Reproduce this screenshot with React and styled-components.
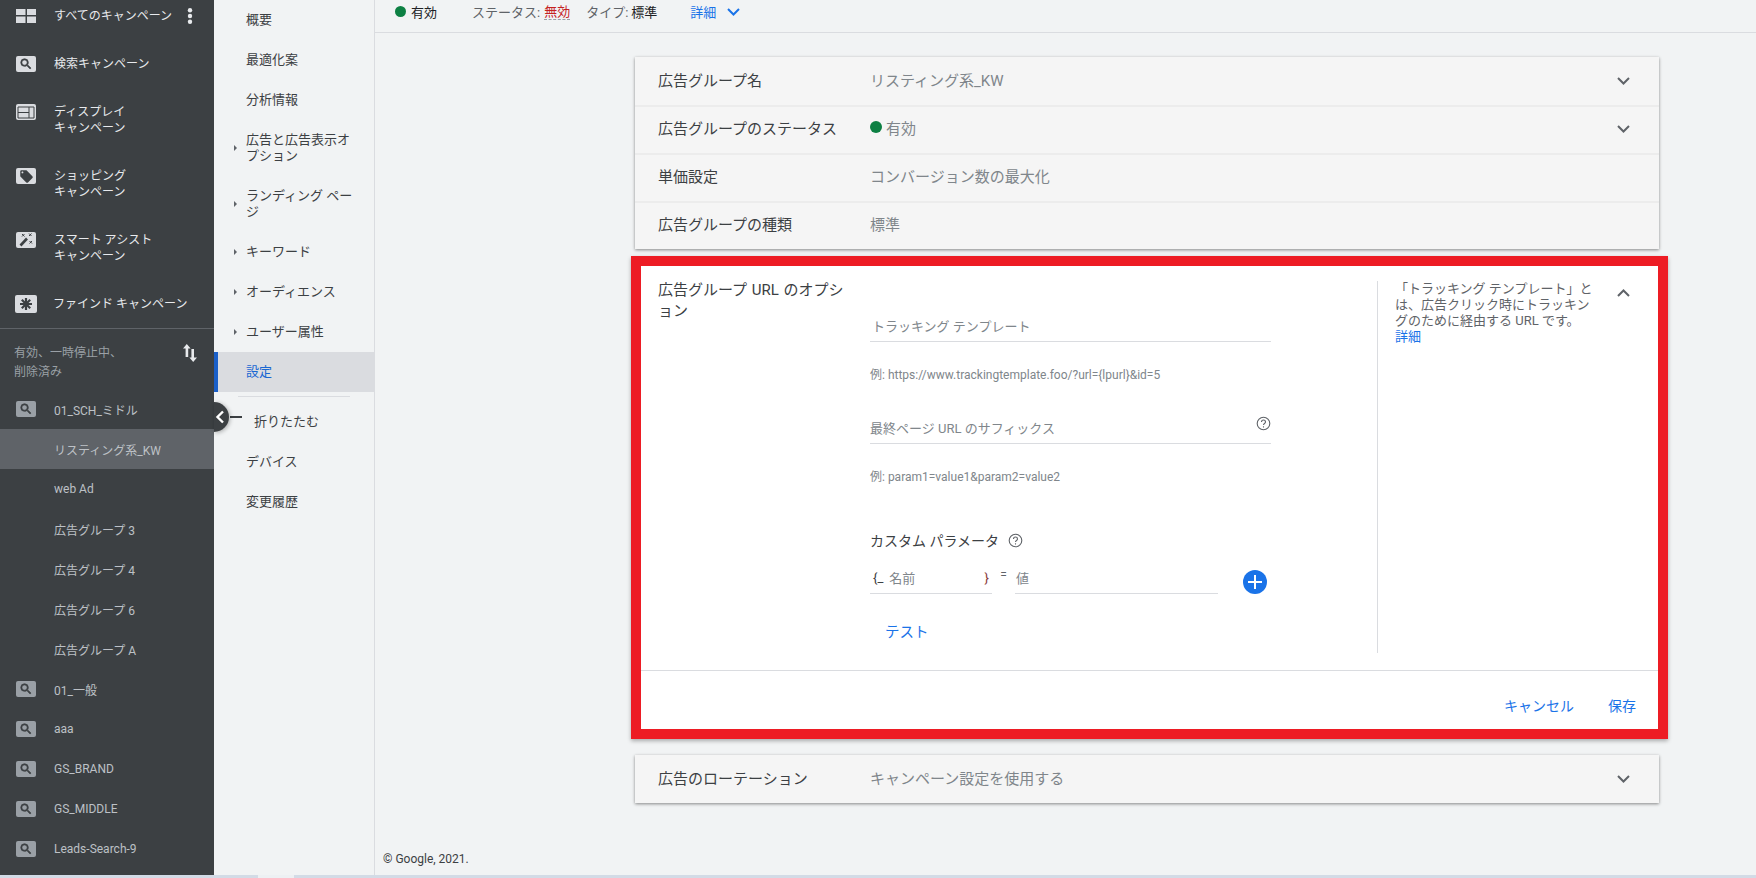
import React from "react";
import styled, { createGlobalStyle } from "styled-components";

const GlobalStyle = createGlobalStyle`
  html, body {
    margin: 0;
    padding: 0;
    height: 100%;
    overflow: hidden;
    background: #f1f3f4;
    font-family: Roboto, "Noto Sans CJK JP", sans-serif;
  }
  * {
    box-sizing: border-box;
  }
`;

const Page = styled.div`
  display: flex;
  flex-direction: column;
  width: 1756px;
  height: 878px;
  overflow: hidden;
`;

const Body = styled.div`
  display: flex;
  flex: 1;
  min-height: 0;
`;

const ScrollTrack = styled.div`
  flex: none;
  height: 3px;
  background: #d3dbe6;
  padding-left: 258px;
`;

const ScrollThumb = styled.div`
  width: 36px;
  height: 100%;
  background: #edf0f3;
`;

/* dark campaign tree */
const Sidebar = styled.aside`
  flex: none;
  width: 214px;
  background: #3c4043;
  overflow: hidden;
`;

const CampaignRow = styled.div`
  display: flex;
  align-items: ${(props) => (props.$multi ? "flex-start" : "center")};
  height: ${(props) => props.$height || 64}px;
  padding: ${(props) => (props.$multi ? "8px" : "0")} 0 0 16px;
  color: #e8eaed;
  font-size: 12px;
  line-height: 16px;
`;

const GroupRow = styled.div`
  display: flex;
  align-items: center;
  height: 40px;
  padding-left: ${(props) => (props.$child ? 54 : 16)}px;
  color: #bdc1c6;
  font-size: 12px;
  background: ${(props) => (props.$selected ? "#5f6368" : "transparent")};
`;

const Badge = styled.span`
  flex: none;
  display: flex;
  align-items: center;
  justify-content: center;
  width: ${(props) => props.$width || 20}px;
  height: ${(props) => props.$tall || 16}px;
  margin-right: ${(props) => (props.$width ? 16 : 18)}px;
  margin-left: ${(props) => (props.$width ? -1 : 0)}px;
  border-radius: 2px;
  background: ${(props) => props.$bg || "#dadce0"};
  color: #3c4043;
`;

const RowText = styled.span`
  flex: 1;
  white-space: nowrap;
`;

const RowGlyph = styled.span`
  flex: none;
  display: flex;
  width: 14px;
  margin-right: 13px;
`;

const ScopeBar = styled.div`
  display: flex;
  justify-content: space-between;
  height: 61px;
  margin-top: 8px;
  padding: 15px 17px 0 14px;
  border-top: 1px solid #5f6368;
  color: #9aa0a6;
  font-size: 12px;
  line-height: 19px;
`;

/* light section nav */
const NavPanel = styled.nav`
  position: relative;
  flex: none;
  width: 161px;
  border-right: 1px solid #dadce0;
  background: #f1f3f4;
  color: #3c4043;
  font-size: 13px;
  line-height: 16px;
`;

const NavItem = styled.div`
  display: flex;
  align-items: center;
  height: ${(props) => props.$height || 40}px;
  padding-right: 14px;
  color: ${(props) => (props.$active ? "#1967d2" : "#3c4043")};
  background: ${(props) => (props.$active ? "#dadce0" : "transparent")};
  box-shadow: ${(props) => (props.$active ? "inset 4px 0 0 #1a5fc8" : "none")};
`;

const ArrowSlot = styled.span`
  flex: none;
  width: 32px;
  padding-left: 20px;
`;

const Triangle = styled.span`
  display: block;
  width: 0;
  height: 0;
  border-top: 3.5px solid transparent;
  border-bottom: 3.5px solid transparent;
  border-left: 3.5px solid #5f6368;
`;

const NavDivider = styled.div`
  height: 1px;
  margin: 4px 24px 5px 24px;
  background: #dadce0;
`;

const CollapseRow = styled.div`
  display: flex;
  align-items: center;
  height: 40px;
  padding-left: 40px;
`;

const Handle = styled.button`
  position: absolute;
  left: 0;
  top: 402px;
  display: flex;
  align-items: center;
  width: 15px;
  height: 30px;
  padding: 0 0 0 1px;
  border: 0;
  border-radius: 0 15px 15px 0;
  background: #3c4043;
  box-shadow: 1px 1px 4px rgba(0, 0, 0, 0.3);
`;

const HandleDash = styled.span`
  position: absolute;
  left: 16px;
  top: 416px;
  width: 12px;
  height: 2px;
  background: #3c4043;
`;

/* main column */
const Main = styled.main`
  display: flex;
  flex: 1;
  flex-direction: column;
  min-width: 0;
  background: #f1f3f4;
`;

const StatusBar = styled.header`
  flex: none;
  display: flex;
  align-items: center;
  height: 33px;
  padding: 0 0 9px 20px;
  border-bottom: 1px solid #dadce0;
  color: #3c4043;
  font-size: 13px;
`;

const Dot = styled.span`
  flex: none;
  width: ${(props) => props.$size || 11}px;
  height: ${(props) => props.$size || 11}px;
  margin-right: ${(props) => props.$gap || 5}px;
  border-radius: 50%;
  background: #0d8043;
`;

const StatusText = styled.span`
  margin-left: ${(props) => props.$left || 0}px;
  color: ${(props) => props.$color || "#202124"};
  white-space: nowrap;
`;

const FlaggedText = styled.span`
  margin-left: 4px;
  color: #c5221f;
  border-bottom: 1px dashed #9aa0a6;
  line-height: 15px;
`;

const DetailLink = styled.span`
  margin: 0 11px 0 33px;
  color: #1a73e8;
`;

const Content = styled.div`
  flex: none;
  width: 1024px;
  margin: 24px 0 0 260px;
`;

const CardStack = styled.section`
  background: #f5f5f5;
  box-shadow: 0 1px 3px rgba(0, 0, 0, 0.45);
`;

const SummaryRow = styled.div`
  display: flex;
  align-items: center;
  height: 48px;
  padding: 0 29px 0 23px;
  box-shadow: ${(props) => (props.$first ? "none" : "inset 0 2px 0 #ececec")};
  font-size: 15px;
`;

const RowLabel = styled.span`
  flex: none;
  width: 212px;
  margin-bottom: 4px;
  color: #3c4043;
`;

const RowValue = styled.span`
  display: flex;
  align-items: center;
  flex: 1;
  margin-bottom: 4px;
  color: #80868b;
`;

const EditCard = styled.section`
  display: flex;
  flex-direction: column;
  height: 483px;
  margin: 7px -9px 16px -4px;
  border: 10px solid #ed1c24;
  background: #fff;
  box-shadow: 0 2px 4px rgba(0, 0, 0, 0.3);
`;

const EditBody = styled.div`
  display: flex;
  flex: none;
  height: 404px;
  padding-left: 17px;
`;

const EditLabel = styled.div`
  flex: none;
  width: 212px;
  padding: 14px 0 0 0;
  color: #3c4043;
  font-size: 15px;
  line-height: 21px;
  word-spacing: 1px;
`;

const Form = styled.div`
  flex: none;
  width: 401px;
  padding-top: 43px;
`;

const Field = styled.div`
  display: flex;
  align-items: center;
  justify-content: space-between;
  width: ${(props) => props.$width || "100%"};
  height: 33px;
  padding-left: ${(props) => props.$pad || 0}px;
  border-bottom: 1px solid #dadce0;
  color: #80868b;
  font-size: 13px;
`;

const Hint = styled.div`
  margin: ${(props) => props.$top}px 0 ${(props) => props.$bottom}px;
  color: #80868b;
  font-size: 12px;
  line-height: 16px;
`;

const ParamTitle = styled.div`
  display: flex;
  align-items: center;
  height: 20px;
  color: #3c4043;
  font-size: 14px;
`;

const ParamRow = styled.div`
  display: flex;
  align-items: flex-end;
  margin-top: 11px;
`;

const Brace = styled.span`
  color: ${(props) => props.$color || "#3c4043"};
  font-size: 13px;
  margin-right: ${(props) => props.$right || 0}px;
`;

const NameSlot = styled.span`
  flex: 1;
`;

const Equals = styled.span`
  flex: none;
  width: 23px;
  height: 33px;
  padding-top: 7px;
  color: #5f6368;
  font-size: 12px;
  text-align: center;
`;

const AddButton = styled.span`
  flex: none;
  display: flex;
  align-items: center;
  justify-content: center;
  width: 24px;
  height: 24px;
  margin-left: 25px;
  border-radius: 50%;
  background: #1a73e8;
`;

const TestLink = styled.div`
  margin: 29px 0 0 15px;
  color: #1a73e8;
  font-size: 14.5px;
  line-height: 20px;
`;

const HelpColumn = styled.div`
  flex: none;
  width: 218px;
  height: 372px;
  margin: 15px 0 0 106px;
  padding-left: 17px;
  border-left: 1px solid #dadce0;
  color: #5f6368;
  font-size: 13px;
  line-height: 16px;
`;

const HelpLink = styled.div`
  color: #1a73e8;
`;

const CollapseSlot = styled.div`
  display: flex;
  justify-content: flex-end;
  flex: 1;
  padding: 23px 28px 0 0;
`;

const EditFooter = styled.div`
  display: flex;
  flex: 1;
  align-items: center;
  justify-content: flex-end;
  gap: 34px;
  padding: 10px 22px 0 0;
  border-top: 1px solid #dadce0;
  color: #1a73e8;
  font-size: 14px;
`;

const Copyright = styled.footer`
  margin-top: auto;
  padding: 0 0 8px 8px;
  color: #3c4043;
  font-size: 12px;
  line-height: 16px;
`;

const SearchGlyph = ({ size = 14 }) => (
  <svg width={size} height={size} viewBox="0 0 24 24" fill="currentColor">
    <path d="M15.5 14h-.79l-.28-.27A6.47 6.47 0 0 0 16 9.5 6.5 6.5 0 1 0 9.5 16c1.61 0 3.09-.59 4.23-1.57l.27.28v.79l5 4.99L20.49 19l-4.99-5zm-6 0C7.01 14 5 11.99 5 9.5S7.01 5 9.5 5 14 7.01 14 9.5 11.99 14 9.5 14z" stroke="currentColor" strokeWidth="1.2" />
  </svg>
);

const GridIcon = () => (
  <svg width="20" height="14" viewBox="0 0 20 14" fill="#dadce0">
    <rect x="0" y="0" width="9.5" height="6" />
    <rect x="11" y="0" width="9" height="6" />
    <rect x="0" y="7.5" width="9.5" height="6.5" />
    <rect x="11" y="7.5" width="9" height="6.5" />
  </svg>
);

const DisplayGlyph = () => (
  <svg width="20" height="16" viewBox="0 0 20 16" fill="none" stroke="#3c4043" strokeWidth="1">
    <path d="M2 3h16v11H2zM2 8.5h11M13 3v11" />
  </svg>
);

const TagGlyph = () => (
  <svg width="15" height="15" viewBox="0 0 24 24" fill="currentColor">
    <path d="M21.41 11.58l-9-9C12.05 2.22 11.55 2 11 2H4c-1.1 0-2 .9-2 2v7c0 .55.22 1.05.59 1.42l9 9c.36.36.86.58 1.41.58.55 0 1.05-.22 1.41-.59l7-7c.37-.36.59-.86.59-1.41 0-.55-.23-1.06-.59-1.42zM5.5 7C4.67 7 4 6.33 4 5.5S4.67 4 5.5 4 7 4.67 7 5.5 6.33 7 5.5 7z" />
  </svg>
);

const WandGlyph = () => (
  <svg width="20" height="16" viewBox="0 0 20 16" fill="none" stroke="#3c4043">
    <path d="M4.5 13.5l6.5-7" strokeWidth="2.6" />
    <path d="M6 2l2.5 2.5M8.5 2L6 4.5M13 1.5l2.5 2.5M15.5 1.5L13 4M13.5 9l2.5 2.5M16 9l-2.5 2.5" strokeWidth="1" />
  </svg>
);

const BurstGlyph = () => (
  <svg width="14" height="14" viewBox="0 0 14 14" stroke="#3c4043" strokeWidth="2.2">
    <path d="M7 1v12M1 7h12M2.8 2.8l8.4 8.4M11.2 2.8l-8.4 8.4" />
  </svg>
);

const SortIcon = () => (
  <svg width="14" height="18" viewBox="0 0 14 18" fill="#e8eaed">
    <path d="M3.8 0L7.6 4.5H5.2V13H2.6V4.5H0zM8.4 5h2.6v8.5h3L10.2 18 6.4 13.5h2z" />
  </svg>
);

const Dots = () => (
  <svg width="6" height="16" viewBox="0 0 6 16" fill="#e8eaed">
    <circle cx="3" cy="2.2" r="2.2" />
    <circle cx="3" cy="8" r="2.2" />
    <circle cx="3" cy="13.8" r="2.2" />
  </svg>
);

const Chevron = ({ up, color = "#5f6368" }) => (
  <svg width="13" height="8" viewBox="0 0 13 8" fill="none" stroke={color} strokeWidth="2">
    <path d={up ? "M1 7l5.5-5.5L12 7" : "M1 1l5.5 5.5L12 1"} />
  </svg>
);

const HelpIcon = ({ style }) => (
  <svg width="15" height="15" viewBox="0 0 15 15" fill="none" stroke="#5f6368" style={style}>
    <circle cx="7.5" cy="7.5" r="6.3" strokeWidth="1.1" />
    <path d="M5.5 6c0-2.6 4-2.6 4 0 0 1.5-2 1.5-2 3" strokeWidth="1.1" />
    <path d="M7.5 10.3v1.2" strokeWidth="1.1" />
  </svg>
);

const groups = [
  { name: "01_SCH_ミドル", icon: true },
  { name: "リスティング系_KW", selected: true },
  { name: "web Ad" },
  { name: "広告グループ 3" },
  { name: "広告グループ 4" },
  { name: "広告グループ 6" },
  { name: "広告グループ A" },
  { name: "01_一般", icon: true },
  { name: "aaa", icon: true },
  { name: "GS_BRAND", icon: true },
  { name: "GS_MIDDLE", icon: true },
  { name: "Leads-Search-9", icon: true },
];

const navTop = [
  { label: "概要" },
  { label: "最適化案" },
  { label: "分析情報" },
  { label: "広告と広告表示オプション", arrow: true, height: 56 },
  { label: "ランディング ページ", arrow: true, height: 56 },
  { label: "キーワード", arrow: true },
  { label: "オーディエンス", arrow: true },
  { label: "ユーザー属性", arrow: true },
  { label: "設定", active: true },
];

const App = () => (
  <>
    <GlobalStyle />
    <Page>
      <Body>
        <Sidebar>
          <CampaignRow $height={32}>
            <Badge $bg="transparent">
              <GridIcon />
            </Badge>
            <RowText>すべてのキャンペーン</RowText>
            <RowGlyph>
              <Dots />
            </RowGlyph>
          </CampaignRow>
          <CampaignRow>
            <Badge>
              <SearchGlyph />
            </Badge>
            <RowText>検索キャンペーン</RowText>
          </CampaignRow>
          <CampaignRow $multi>
            <Badge>
              <DisplayGlyph />
            </Badge>
            <RowText>
              ディスプレイ
              <br />
              キャンペーン
            </RowText>
          </CampaignRow>
          <CampaignRow $multi>
            <Badge>
              <TagGlyph />
            </Badge>
            <RowText>
              ショッピング
              <br />
              キャンペーン
            </RowText>
          </CampaignRow>
          <CampaignRow $multi>
            <Badge>
              <WandGlyph />
            </Badge>
            <RowText>
              スマート アシスト
              <br />
              キャンペーン
            </RowText>
          </CampaignRow>
          <CampaignRow $height={32}>
            <Badge $width={22} $tall={18}>
              <BurstGlyph />
            </Badge>
            <RowText>ファインド キャンペーン</RowText>
          </CampaignRow>
          <ScopeBar>
            <span>
              有効、一時停止中、
              <br />
              削除済み
            </span>
            <SortIcon />
          </ScopeBar>
          {groups.map((group) => (
            <GroupRow key={group.name} $child={!group.icon} $selected={group.selected}>
              {group.icon && (
                <Badge $bg="#9aa0a6">
                  <SearchGlyph />
                </Badge>
              )}
              <RowText>{group.name}</RowText>
            </GroupRow>
          ))}
        </Sidebar>

        <NavPanel>
          {navTop.map((item) => (
            <NavItem key={item.label} $height={item.height} $active={item.active}>
              <ArrowSlot>{item.arrow && <Triangle />}</ArrowSlot>
              <span>{item.label}</span>
            </NavItem>
          ))}
          <NavDivider />
          <CollapseRow>折りたたむ</CollapseRow>
          <NavItem>
            <ArrowSlot />
            <span>デバイス</span>
          </NavItem>
          <NavItem>
            <ArrowSlot />
            <span>変更履歴</span>
          </NavItem>
          <HandleDash />
          <Handle aria-label="折りたたむ">
            <svg width="10" height="14" viewBox="0 0 10 14" fill="none" stroke="#fff" strokeWidth="2.4">
              <path d="M8 1.5L2.5 7 8 12.5" />
            </svg>
          </Handle>
        </NavPanel>

        <Main>
          <StatusBar>
            <Dot />
            <StatusText>有効</StatusText>
            <StatusText $left={35} $color="#5f6368">
              ステータス:
            </StatusText>
            <FlaggedText>無効</FlaggedText>
            <StatusText $left={16} $color="#5f6368">
              タイプ:
            </StatusText>
            <StatusText $left={3}>標準</StatusText>
            <DetailLink>詳細</DetailLink>
            <Chevron color="#1a73e8" />
          </StatusBar>

          <Content>
            <CardStack>
              <SummaryRow $first>
                <RowLabel>広告グループ名</RowLabel>
                <RowValue>リスティング系_KW</RowValue>
                <Chevron />
              </SummaryRow>
              <SummaryRow>
                <RowLabel>広告グループのステータス</RowLabel>
                <RowValue>
                  <Dot $size={12} $gap={4} />
                  有効
                </RowValue>
                <Chevron />
              </SummaryRow>
              <SummaryRow>
                <RowLabel>単価設定</RowLabel>
                <RowValue>コンバージョン数の最大化</RowValue>
              </SummaryRow>
              <SummaryRow>
                <RowLabel>広告グループの種類</RowLabel>
                <RowValue>標準</RowValue>
              </SummaryRow>
            </CardStack>

            <EditCard>
              <EditBody>
                <EditLabel>
                  広告グループ URL のオプシ
                  <br />
                  ョン
                </EditLabel>
                <Form>
                  <Field $pad={2}>トラッキング テンプレート</Field>
                  <Hint $top={25} $bottom={28}>
                    例: https://www.trackingtemplate.foo/?url={"{lpurl}"}&id=5
                  </Hint>
                  <Field>
                    最終ページ URL のサフィックス
                    <HelpIcon style={{ marginBottom: 8 }} />
                  </Field>
                  <Hint $top={25} $bottom={45}>
                    例: param1=value1&param2=value2
                  </Hint>
                  <ParamTitle>
                    カスタム パラメータ
                    <HelpIcon style={{ marginLeft: 9 }} />
                  </ParamTitle>
                  <ParamRow>
                    <Field $width="122px" $pad={3}>
                      <Brace $right={6}>{"{"}_</Brace>
                      <NameSlot>名前</NameSlot>
                      <Brace $color="#8a3a38" $right={3}>
                        {"}"}
                      </Brace>
                    </Field>
                    <Equals>=</Equals>
                    <Field $width="203px" $pad={1}>
                      値
                    </Field>
                    <AddButton>
                      <svg width="14" height="14" viewBox="0 0 14 14" stroke="#fff" strokeWidth="2">
                        <path d="M7 0v14M0 7h14" />
                      </svg>
                    </AddButton>
                  </ParamRow>
                  <TestLink>テスト</TestLink>
                </Form>
                <HelpColumn>
                  「トラッキング テンプレート」とは、広告クリック時にトラッキングのために経由する URL です。
                  <HelpLink>詳細</HelpLink>
                </HelpColumn>
                <CollapseSlot>
                  <Chevron up />
                </CollapseSlot>
              </EditBody>
              <EditFooter>
                <span>キャンセル</span>
                <span>保存</span>
              </EditFooter>
            </EditCard>

            <CardStack>
              <SummaryRow $first>
                <RowLabel>広告のローテーション</RowLabel>
                <RowValue>キャンペーン設定を使用する</RowValue>
                <Chevron />
              </SummaryRow>
            </CardStack>
          </Content>

          <Copyright>© Google, 2021.</Copyright>
        </Main>
      </Body>
      <ScrollTrack>
        <ScrollThumb />
      </ScrollTrack>
    </Page>
  </>
);

export default App;
